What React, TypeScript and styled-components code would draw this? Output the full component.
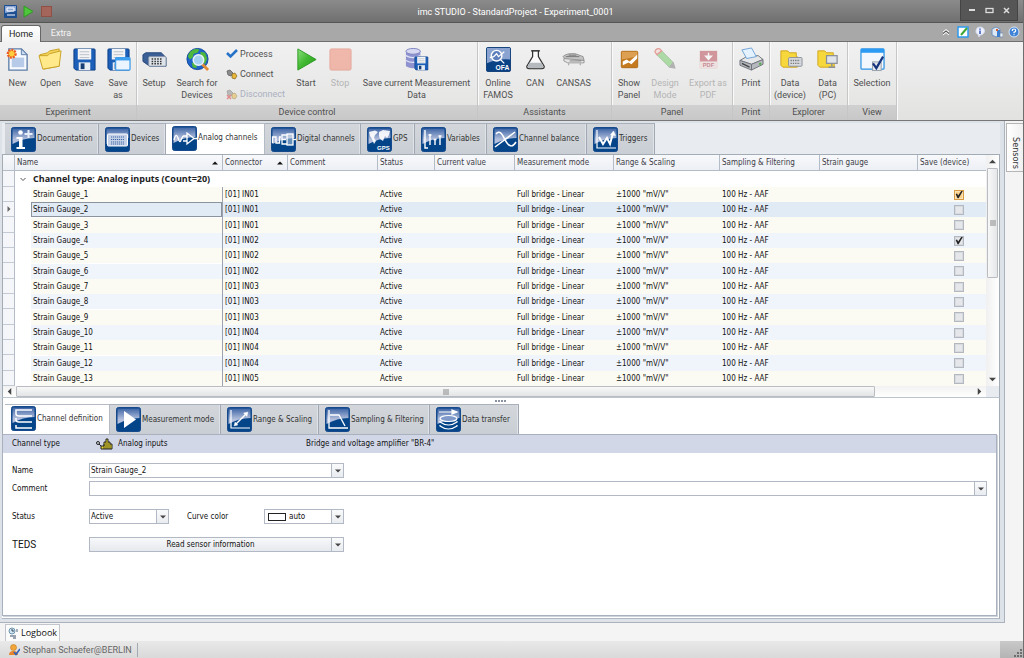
import React from 'react';
import styled, { createGlobalStyle, css } from 'styled-components';

const ui = 'Roboto, "Open Sans", sans-serif';
const dock = '"Open Sans", "Noto Sans", sans-serif';
const grid = '"DejaVu Sans Condensed", "DejaVu Sans", sans-serif';

const Global = createGlobalStyle`
  *, *::before, *::after { box-sizing: border-box; }
  body { margin: 0; font: 8px/12px ${grid}; color: #111; background: #f4f4f4; }
  button, input, select { font: inherit; color: inherit; margin: 0; padding: 0; border: 0; background: none; border-radius: 0; }
`;

/* ---------- window chrome ---------- */
const Shell = styled.div`
  display: flex; flex-direction: column; min-height: 100vh;
  border-right: 1px solid #6e6e6e;
`;
const TitleBar = styled.header`
  display: grid; grid-template-columns: 1fr auto 1fr; align-items: start; height: 23px;
  background: linear-gradient(#8b8b8b, #707070); border-bottom: 1px solid #555;
`;
const QuickBar = styled.div`
  display: flex; gap: 5px; padding: 5px 0 0 4px;
`;
const QuickButton = styled.button`width: 13px; height: 13px; line-height: 0;`;
const Title = styled.h1`
  margin: 0; padding: 5px 0 0 8px; font: 9px/14px ${ui}; color: #fff;
`;
const WindowButtons = styled.div`
  justify-self: end; display: flex; align-items: center; justify-content: center; gap: 4px;
  width: 58px; height: 21px; margin-right: 5px; background: #565656;
  border: 1px solid #444; border-top: 0;
`;
const WindowButton = styled.button`width: 13px; height: 13px; line-height: 0;`;
const MenuStrip = styled.nav`
  display: flex; align-items: flex-end; height: 19px; padding-left: 1px;
  background: #a8a8a8; border-bottom: 1px solid #707070; font: 9px/14px ${ui};
`;
const MenuTab = styled.button<{ $active?: boolean }>`
  width: 40px; height: 17px; margin-bottom: -1px; color: #f4f4f4; padding-bottom: 1px;
  ${p => p.$active && css`
    background: linear-gradient(#fff, #f2f2f2); color: #222; border: 1px solid #666;
    border-bottom: 0; border-radius: 3px 3px 0 0;
  `}
`;
const HelpTools = styled.div`
  display: flex; align-items: center; gap: 5px; margin-left: auto; height: 18px; padding-right: 3px;
`;
const HelpButton = styled.button`width: 12px; height: 12px; line-height: 0;`;

/* ---------- ribbon ---------- */
const Ribbon = styled.div`
  display: flex; height: 79px; background: linear-gradient(#f1f1f1, #e2e2e1);
  border-bottom: 1px solid #777; font: 9px/12px ${ui}; color: #505050;
`;
const Group = styled.section`
  display: flex; flex-direction: column; padding: 0 1px;
  border-right: 1px solid #c6c6c6; box-shadow: 1px 0 0 #fafafa;
`;
const GroupItems = styled.div<{ $tail?: number }>`display: flex; flex: 1; padding-right: ${p => p.$tail || 0}px;`;
const GroupTitle = styled.h2`
  margin: 0 -1px; font: inherit; line-height: 15px; height: 15px; text-align: center; color: #505050;
  background: linear-gradient(#d0d0d0, #c8c8c8);
`;
const BigButton = styled.button<{ $w: number }>`
  display: flex; flex-direction: column; align-items: center; gap: 5px; width: ${p => p.$w}px;
  padding-top: 5px; line-height: 12px; white-space: nowrap;
  &:disabled { color: #b4b4b4; }
  &:disabled svg { opacity: 0.5; }
  svg { flex: none; }
`;
const ButtonStack = styled.div`
  display: flex; flex-direction: column; width: 65px; padding: 5px 0 0 2px; gap: 6px;
`;
const SmallButton = styled.button`
  display: flex; align-items: center; gap: 2px; height: 14px;
  &:disabled { color: #aab0c0; }
  &:disabled svg { opacity: 0.5; }
`;

/* ---------- workspace ---------- */
const Workspace = styled.div`display: flex; flex: 1;`;
const Frame = styled.main`
  display: flex; flex-direction: column; flex: 1; min-width: 0;
  padding: 2px 4px 3px 2px; background: #dde2e8; border-right: 1px solid #a9b2bd; border-bottom: 1px solid #a9b2bd;
`;
const SideDock = styled.aside`width: 18px; padding: 2px 0 0 1px; background: #f4f4f4;`;
const SideTab = styled.button`
  writing-mode: vertical-rl; width: 17px; height: 49px; font-size: 9px; line-height: 15px; text-align: right; padding-bottom: 2px;
  background: linear-gradient(90deg, #fff, #f0f0f0); border: 1px solid #b5b5b5; border-right: 0; color: #333;
`;
const TabRow = styled.div<{ $plain?: boolean }>`
  display: flex; height: 31px; padding-left: 3px; background: #e8ebf0;
  ${p => p.$plain && css`height: 30px; padding-left: 2px; background: #fff; border-left: 1px solid #a3abb5;`}
`;
const Tab = styled.button<{ $w: number; $active?: boolean }>`
  display: flex; align-items: center; gap: 1px; width: ${p => p.$w}px; padding-left: 6px; white-space: nowrap;
  color: #333; background: linear-gradient(#d3d7dc, #c9ced4);
  border-top: 1px solid #a9b0ba; border-right: 1px solid #a0a8b3; box-shadow: inset -1px 0 0 #dfe3e8;
  svg { flex: none; }
  ${p => p.$active && css`background: #fff; box-shadow: none; border-color: #b4bbc5; padding-bottom: 2px;`}
`;

/* ---------- channel grid ---------- */
const GridBox = styled.section`
  display: grid; grid-template-columns: minmax(0, 1fr) 13px; background: #fff;
  border: 1px solid #a3abb5; border-bottom-color: #bcc4ce;
`;
const Table = styled.table`
  width: 100%; table-layout: fixed; border-collapse: separate; border-spacing: 0; text-align: left;
  td, th { padding: 0 0 0 2px; white-space: nowrap; overflow: hidden; font-weight: normal; }
  thead th {
    height: 16px; color: #3c3c46; background: linear-gradient(#f8f9fb, #eceff4);
    border-right: 1px solid #b4bcc8; border-bottom: 1px solid #b4bcc8;
  }
  thead th:last-child { border-right: 0; }
`;
const HeadCell = styled.div`display: flex; align-items: center; justify-content: space-between; padding-right: 4px;`;
const Row = styled.tr<{ $tone: 'cream' | 'blue' | 'focus' }>`
  height: 15px; line-height: 15px;
  &:nth-child(3n + 1) { height: 16px; }
  --tone: ${p => ({ cream: '#fbfbf3', blue: '#f0f4fb', focus: '#e1ebf6' })[p.$tone]};
  td { background: var(--tone); }
`;
const GroupRow = styled.tr`height: 16px;`;
const GroupLabel = styled.div`
  display: flex; align-items: center; gap: 6px; padding-left: 2px; color: #222; font: bold 9px/14px ${dock};
`;
const IndicatorCell = styled.td`
  && { background: #f4f6f9; border-right: 1px solid #b4bcc8; border-bottom: 1px solid #c3cad4; padding-left: 3px; line-height: 0; }
`;
const NameCell = styled.td`
  && { background: #fff; padding: 0 0 0 16px; border-right: 1px solid #9aa3af; }
`;
const NameText = styled.div<{ $focus: boolean }>`
  height: 15px; line-height: 13px; padding-left: 1px; background: var(--tone);
  border: 1px ${p => (p.$focus ? 'solid #8b939e' : 'solid transparent')};
`;
const CheckCell = styled.td`&& { padding: 0 0 0 36px; line-height: 0; }`;
const Check = styled.input<{ $hot?: boolean }>`
  appearance: none; display: block; width: 10px; height: 10px; background: ${p => (p.$hot ? '#fbd28c' : '#e6e7ea')};
  border: 1px solid ${p => (p.$hot ? '#d79a45' : '#b3b8c0')}; box-shadow: inset 0 0 0 1px ${p => (p.$hot ? '#fbe3b8' : '#d7dadf')};
  &:checked::before {
    content: ''; display: block; height: 8px; background: #222;
    clip-path: polygon(8% 45%, 25% 38%, 40% 62%, 78% 5%, 98% 5%, 45% 98%, 32% 98%);
  }
`;
const VScroll = styled.div`
  display: flex; flex-direction: column; align-items: center; background: linear-gradient(90deg, #f0f0f0, #fff);
`;
const ScrollButton = styled.button`display: grid; place-items: center; width: 13px; height: 13px; flex: none;`;
const VThumb = styled.div`
  display: grid; place-items: center; width: 11px; height: 110px; margin-bottom: auto;
  border: 1px solid #b9bdc2; border-radius: 1px; background: linear-gradient(90deg, #f8f8f8, #e4e6e8);
`;
const HScroll = styled.div`
  display: flex; align-items: center; height: 11px; background: linear-gradient(#f2f2f2, #fff);
`;
const HThumb = styled.div`
  display: grid; place-items: center; flex: 1; height: 11px; margin-right: 98px;
  border: 1px solid #b9bdc2; border-radius: 1px; background: linear-gradient(#f8f8f8, #e2e4e6);
`;
const Corner = styled.div`background: #e8ebf0;`;

/* ---------- property panel ---------- */
const Splitter = styled.div`
  display: grid; place-items: center; height: 6px; background: #fff; line-height: 0;
  border-left: 1px solid #a3abb5; border-right: 1px solid #a3abb5;
`;
const Lower = styled.section`
  display: flex; flex-direction: column; flex: 1; background: #fff; border-right: 1px solid #a3abb5;
  border-bottom: 1px solid #b0b7c1; padding: 0 2px 2px 0;
`;
const Panel = styled.div`
  flex: 1; border: 1px solid #a9b0be; box-shadow: 1px 1px 0 #cfd4db;
`;
const Banner = styled.div`
  display: grid; grid-template-columns: 84px 210px 1fr; align-items: center; height: 18px; padding-left: 9px; background: #d2d7e8;
`;
const BannerType = styled.span`display: flex; align-items: center; gap: 5px;`;
const Form = styled.form`
  display: grid; grid-template-columns: 77px 80px 95px 80px 1fr; align-items: center;
  row-gap: 3px; padding: 10px 9px;
`;
const Label = styled.label<{ $inset?: boolean; $large?: boolean }>`
  grid-column: ${p => (p.$inset ? 3 : 1)};
  ${p => p.$inset && css`padding-left: 18px;`}
  ${p => p.$large && css`font: 10px/14px ${ui};`}
`;
const Field = styled.div<{ $span?: string; $face?: boolean }>`
  display: flex; height: 15px; grid-column: ${p => p.$span || 'auto'};
  border: 1px solid #b3b9c4; background: ${p => (p.$face ? 'linear-gradient(#f7f8fa, #e6e9ed)' : '#fff')};
`;
const FieldSpace = styled.div`grid-column: 1 / -1; height: 7px;`;
const TextInput = styled.input`flex: 1; min-width: 0; padding-left: 1px; outline: 0;`;
const Select = styled.select`appearance: none; flex: 1; min-width: 0; padding-left: 1px; outline: 0;`;
const FaceButton = styled.button`flex: 1; text-align: center;`;
const DropButton = styled.button`
  display: grid; place-items: center; width: 12px; border-left: 1px solid #b3b9c4; background: linear-gradient(#f9fafb, #e9ecf0);
`;
const Swatch = styled.span`width: 18px; height: 8px; margin: 3px 2px 0 3px; border: 1px solid #222; background: #fff;`;

/* ---------- footer ---------- */
const DockBar = styled.div`
  display: flex; height: 18px; padding: 1px 0 0 5px; background: #f4f4f4; font: 9px/14px ${dock};
`;
const DockTab = styled.button`
  display: flex; align-items: center; gap: 2px; width: 55px; padding-left: 2px; background: #fbfbfb;
  border: 1px solid #c2c6cc; border-bottom: 0; white-space: nowrap;
`;
const StatusBar = styled.footer`
  display: flex; align-items: center; height: 17px; padding-left: 9px; gap: 3px;
  background: linear-gradient(#e9e9e9, #d9d9d9); font: 9px/14px ${ui}; color: #666;
`;
const StatusUser = styled.span`border-right: 1px solid #a3aab3; padding-right: 5px;`;
const Grip = styled.div`
  display: flex; align-items: flex-end; justify-content: flex-end; margin-left: auto; width: 23px; height: 17px;
  background: linear-gradient(#c9c9c9, #b4b4b4);
`;

/* ---------- drawings ---------- */
const Arrow = ({ dir = 'down', w = 7, color = '#444' }: { dir?: 'up' | 'down' | 'left' | 'right'; w?: number; color?: string }) => {
  const d = { up: 'M0 6L4 2L8 6Z', down: 'M0 2L4 6L8 2Z', left: 'M6 0L2 4L6 8Z', right: 'M2 0L6 4L2 8Z' }[dir];
  return <svg width={w} height={w} viewBox="0 0 8 8"><path d={d} fill={color} /></svg>;
};

const tileArt: Record<string, React.ReactNode> = {
  doc: <g fill="#fff"><circle cx="9.500" cy="5.500" r="2.300" /><path d="M5.500 10H11.500V20H14V22H5.500V20H8V12H5.500Z" /><path d="M17.500 3V11M13.500 7H21.500" stroke="#e8eef8" strokeWidth="2" /></g>,
  device: <g><rect x="2.500" y="7" width="20" height="12" rx="1" fill="#c4d0e6" stroke="#fff" /><path d="M6 10H19M6 12.500H19M6 15H19M6 17H19" stroke="#3c66a6" strokeWidth="1.200" strokeDasharray="1.200 .8" /></g>,
  analog: <g fill="none" stroke="#fff" strokeWidth="1.300"><path d="M2 14Q4 6 6 12T9 14L11 10M11 10H15M11 15H15M15 7V18L22 12.500ZM22 12.500H25" /></g>,
  digital: <g fill="none" stroke="#fff" strokeWidth="1.300"><path d="M1.500 16V10H5V16H8.500V10H10M16 8H11V17H16M11 12.500H15" /><rect x="16" y="7" width="6" height="11" fill="#ffffff66" /><path d="M22 12.500H25" /></g>,
  gps: <g fill="#fff"><path d="M2 5L8 3.500L11 5L8 8L7 11L9 14L7 17L5 12L3 9ZM12 5L16 3L23 4L22 8L20 11L18 9L16 14L13 12L12 9Z" opacity=".9" /><text x="10" y="23" fontSize="6" fontWeight="bold" fontFamily="Liberation Sans">GPS</text></g>,
  vars: <g fill="none" stroke="#fff" strokeWidth="1.400"><path d="M4 3V21H7M9 18V7M14 18V12M19 18V9M7.500 8H10.500M12.500 12.500H15.500M17.500 9H20.500" /></g>,
  balance: <g fill="none" stroke="#fff" strokeWidth="1.500"><path d="M2 20L22 5M3 7C8 1 11 12 14 16S20 20 23 15" /></g>,
  trigger: <g fill="none" stroke="#fff"><path d="M4 3V21H23" strokeWidth="1.200" /><path d="M6 10L10 17L14 11L17 17L20 6" strokeWidth="2" /><path d="M17.500 8L20.500 4L22.500 8.500Z" fill="#fff" strokeWidth=".5" /></g>,
  define: <g fill="none" stroke="#fff" strokeWidth="1.500"><path d="M21 4H5V8Q5 10 8 10H21M5 12V14Q5 16 8 16H21M5 19V22H21" /></g>,
  play: <path d="M8 4L20 12.500L8 21Z" fill="#fff" />,
  range: <g fill="none" stroke="#fff"><path d="M4 3V21H23" strokeWidth="1.200" /><path d="M9 17L19 7" strokeWidth="1.400" /><path d="M16.500 6L21 5L20 9.500ZM8 15L7 19L11 18Z" fill="#fff" strokeWidth=".3" /></g>,
  filter: <g fill="none" stroke="#fff" strokeWidth="1.300"><path d="M4 3V21H23M5 8H14L20 19" /></g>,
  transfer: <g fill="#7f9aca" stroke="#fff" strokeWidth="1.200"><path d="M3 5H18M16 3L21 5L16 7Z" fill="#fff" /><path d="M4 18V19Q12.500 25 21 19V18M4 14V15Q12.500 21 21 15V14" fill="none" /><ellipse cx="12.500" cy="11.500" rx="8.500" ry="3" /></g>,
};
const Tile = ({ kind }: { kind: string }) => (
  <svg width="25" height="25" viewBox="0 0 25 25">
    <defs><linearGradient id={`sheen-${kind}`} x1="0" y1="0" x2="0" y2="1"><stop offset="0" stopColor="#3f66a6" /><stop offset="0.700" stopColor="#b3bfdc" /></linearGradient></defs>
    <rect x=".5" y=".5" width="24" height="24" rx="2" fill="#04458a" stroke="#164a8c" />
    <path d="M1.500 1.500H23.500V11Q12 11 1.500 17Z" fill={`url(#sheen-${kind})`} />
    {tileArt[kind]}
  </svg>
);

const Floppy = () => <g><path d="M2 3Q2 2 3 2H23Q24 2 24 3V24H4L2 22Z" fill="#1c5fb8" stroke="#0e3f86" /><rect x="6" y="2" width="14" height="11" fill="#f3f4f6" /><path d="M8 5H18M8 8H18M8 11H18" stroke="#b9bec6" /><rect x="7" y="16" width="12" height="8" fill="#e8edf3" /><rect x="9" y="17" width="4" height="6" fill="#173d75" /></g>;
const Folder = () => <g stroke="#c9a227"><path d="M2 8L10 6L12 4L22 2V20L6 23Z" fill="#f3d25a" /><path d="M1 9L5 23L22 20L24 4L12 7L10 9Z" fill="#ffe98a" /></g>;
const MiniFolder = () => <path d="M3 4H10L12 6H19V10H20V21H5L3 19Z" fill="#f6d73c" stroke="#cfa520" />;

const art: Record<string, React.ReactNode> = {
  new: <g><path d="M4 2H17L23 8V24H4Z" fill="#f7faff" stroke="#5e7ea8" strokeWidth="1.400" /><path d="M17 2V8H23Z" fill="#cbdcf2" stroke="#5e7ea8" /><rect x="7" y="11" width="13" height="10" fill="#b7cbe8" /><circle cx="7" cy="7" r="4" fill="#ffcf3d" stroke="#ee5a24" strokeWidth="2.500" strokeDasharray="2 1" /></g>,
  open: <Folder />,
  save: <Floppy />,
  saveAs: <g><Floppy /><rect x="10" y="11" width="15" height="13" rx="1" fill="#eaf5ff" stroke="#3f9be8" strokeWidth="1.300" /><path d="M10 12.500H25" stroke="#3fa0f0" strokeWidth="3" /></g>,
  setup: <g><path d="M1 8L4 6H20L25 11V20H8L1 15Z" fill="#3c5f96" stroke="#26477c" /><rect x="7" y="10" width="18" height="10" rx="1" fill="#dfe4ea" stroke="#8593a8" /><path d="M10 12.500H21M10 15H21M10 17.500H21" stroke="#333" strokeWidth="1.600" strokeDasharray="1.600 1.300" /></g>,
  search: <g><circle cx="13" cy="12.500" r="11" fill="#1e63c9" stroke="#124a9c" /><path d="M4 7Q8 1 15 2.500L13 6L9 7L8 11L5 13L3 10ZM16 5L21 6L23 12L21 18L17 15ZM7 16L12 18L12 22L8 21Z" fill="#4eb83c" /><path d="M18 18L24 24" stroke="#e48b35" strokeWidth="3" /><circle cx="14" cy="13.500" r="5.500" fill="#bfe4fa" fillOpacity=".85" stroke="#e9f2f8" strokeWidth="1.500" /></g>,
  start: <path d="M4 2L23 13L4 24Z" fill="url(#leaf)" stroke="#2e9a24" strokeLinejoin="round" />,
  stop: <rect x="2" y="2" width="22" height="22" rx="1.500" fill="#f0836a" stroke="#e06650" />,
  data: <g><path d="M2 4V20Q9 24 17 20V4Z" fill="#8e93cf" /><path d="M2 9Q9 13 17 9M2 14Q9 18 17 14" stroke="#e2e4f7" fill="none" strokeWidth="1.300" /><ellipse cx="9.500" cy="4.500" rx="7.500" ry="3" fill="#d6d8f2" stroke="#8085c0" /><g transform="translate(10 9) scale(.62)"><Floppy /></g></g>,
  ofa: <g><rect x=".5" y=".5" width="25" height="25" rx="1.500" fill="#0a4286" stroke="#123f7a" /><path d="M1 1H25V13Q12 12 1 17Z" fill="#8aa3d0" /><circle cx="11" cy="9" r="5.500" fill="#5c7fbb" stroke="#fff" strokeWidth="1.500" /><path d="M15 13L19 17M4 11L8 10L11 7L13 10L19 5" stroke="#fff" strokeWidth="1.300" fill="none" /><text x="10" y="23.500" fontSize="7" fontWeight="bold" fill="#fff" fontFamily="Liberation Sans">OFA</text></g>,
  can: <g><path d="M10 4V10L4 20Q3.500 22.500 6.500 22.500H19.500Q22.500 22.500 22 20L16 10V4" fill="#fafafa" stroke="#333" strokeWidth="1.300" /><path d="M8.500 4H17.500" stroke="#333" strokeWidth="1.600" /><path d="M6.500 16.500H19.500L21 20.500Q20.500 22 19 22H7Q5 22 5 20Z" fill="#b5babe" /></g>,
  cansas: <g fill="#c3c3c3" stroke="#868686" strokeWidth=".8"><path d="M2 10Q6 6 15 7L23 10L24 14H6Z" /><path d="M3 12L24 14V16.500H7L3 14.500ZM8 17V19M20 17V19" fill="#e5e5e5" /><path d="M5 10H19M8 8.500H16M9 14.500H21" stroke="#555" strokeWidth=".7" /></g>,
  show: <g><rect x="4.500" y="4.500" width="17" height="17" rx="1" fill="#c57a1f" stroke="#b06a15" /><path d="M5 5H21V10L5 13Z" fill="#dda052" /><path d="M6 15L10 13L13 15L21 8V12L15 18L12 16L6 19Z" fill="#fff" /></g>,
  design: <g stroke="#6a9b62"><path d="M4 8L9 4L21 16L17 21Z" fill="#6cc860" /><path d="M4 8L9 4L7 2Q3 1 2 5Z" fill="#f3d4d0" stroke="#d94c42" strokeWidth="1.300" /><path d="M21 16L23 22L17 21Z" fill="#777" stroke="#777" /></g>,
  pdf: <g><rect x="4" y="4" width="18" height="18" fill="#b5404c" /><rect x="4" y="15" width="18" height="7" fill="#f0d6d8" /><path d="M13 6V11M10 9.500L13 13L16 9.500Z" stroke="#fff" fill="#fff" strokeWidth="1.500" /><text x="7" y="21" fontSize="6" fontWeight="bold" fill="#a02a36" fontFamily="Liberation Sans">PDF</text></g>,
  print: <g stroke="#70757c"><path d="M1 14L8 10L20 9L25 13L13 18Z" fill="#e6e7e9" /><path d="M3 3L13 1L18 10L8 12Z" fill="#e4f2ff" stroke="#6fa3d6" /><path d="M1 14V19L13 24V18ZM13 18L25 13V18L13 24Z" fill="#b5b8bd" /><path d="M3 17L11 21" stroke="#444" strokeWidth="1.500" /><path d="M21 17.500H23" stroke="#43b03c" strokeWidth="2" /></g>,
  dataDev: <g><MiniFolder /><rect x="11" y="11" width="14" height="9" rx="1" fill="#d8dbe0" stroke="#8b9098" /><path d="M13 14H23M13 17H23" stroke="#777" strokeWidth="1.400" strokeDasharray="1.400 1" /></g>,
  dataPc: <g><MiniFolder /><rect x="12" y="9" width="11" height="8" fill="#dfe4ea" stroke="#8b9098" strokeWidth="1.300" /><path d="M17.500 17V20M14 21H21" stroke="#8b9098" strokeWidth="1.500" /></g>,
  select: <g><rect x="1" y="2" width="24" height="21" rx="1" fill="#f1f7fd" stroke="#2d93e6" strokeWidth="1.300" /><path d="M1 4H25" stroke="#2a9af2" strokeWidth="4" /><rect x="13" y="15.500" width="9" height="9" fill="#e4e7ea" stroke="#98a0aa" /><path d="M13.500 17L17 22L24 10" stroke="#16357e" strokeWidth="2.300" fill="none" /></g>,
};
const Icon = ({ kind, size = 25 }: { kind: string; size?: number }) => (
  <svg width={size} height={size} viewBox="0 0 26 26">
    <defs><linearGradient id="leaf" x1="0" y1="0" x2="1" y2="1"><stop offset="0" stopColor="#8be07c" /><stop offset=".5" stopColor="#3fb72f" /><stop offset="1" stopColor="#2a9a1e" /></linearGradient></defs>
    {art[kind]}
  </svg>
);
const TickIcon = () => <svg width="12" height="12" viewBox="0 0 12 12"><path d="M1 5L4.500 8.500L11 2" stroke="#2672c8" strokeWidth="2.600" fill="none" /></svg>;
const PlugIcon = ({ off }: { off?: boolean }) => (
  <svg width="12" height="12" viewBox="0 0 12 12"><path d="M1 3L4 2L7 5L5 8L2 7Z" fill="#8c8c8c" stroke="#555" strokeWidth=".7" /><path d="M6 6L9 5L11 8L9 11L6 10Z" fill="#e9b83a" stroke="#7d6420" strokeWidth=".7" />{off && <path d="M1 7L5 11M5 7L1 11" stroke="#d33" strokeWidth="1.500" />}</svg>
);

/* ---------- data ---------- */
const inputs = ['01', '01', '01', '02', '02', '02', '03', '03', '03', '04', '04', '04', '05'];
const columns: [string, number][] = [
  ['Name', 208], ['Connector', 65], ['Comment', 90], ['Status', 57], ['Current value', 80], ['Measurement mode', 99],
  ['Range & Scaling', 106], ['Sampling & Filtering', 100], ['Strain gauge', 98], ['Save (device)', 68],
];
const viewTabs: [string, string, number][] = [
  ['doc', 'Documentation', 94], ['device', 'Devices', 67], ['analog', 'Analog channels', 99], ['digital', 'Digital channels', 96],
  ['gps', 'GPS', 54], ['vars', 'Variables', 72], ['balance', 'Channel balance', 100], ['trigger', 'Triggers', 68],
];
const detailTabs: [string, string, number][] = [
  ['define', 'Channel definition', 105], ['play', 'Measurement mode', 111], ['range', 'Range & Scaling', 98],
  ['filter', 'Sampling & Filtering', 111], ['transfer', 'Data transfer', 89],
];

type Cmd = { icon: string; text: string[]; w: number; off?: boolean };
const Command = ({ icon, text, w, off }: Cmd) => (
  <BigButton $w={w} disabled={off}>
    <Icon kind={icon} />
    <span>{text.map((t, i) => <React.Fragment key={t}>{i > 0 && <br />}{t}</React.Fragment>)}</span>
  </BigButton>
);
const RibbonGroup = ({ title, tail, children }: { title: string; tail?: number; children: React.ReactNode }) => (
  <Group><GroupItems $tail={tail}>{children}</GroupItems><GroupTitle>{title}</GroupTitle></Group>
);

export default function App() {
  return (
    <Shell>
      <Global />
      <TitleBar>
        <QuickBar>
          <QuickButton aria-label="Application menu"><svg width="13" height="13" viewBox="0 0 13 13"><rect width="13" height="13" rx="1" fill="#1d4f93" /><path d="M1 1H12V6L1 8Z" fill="#8da8d4" /><path d="M3 3H10V6H3ZM3 10H11" fill="none" stroke="#fff" /></svg></QuickButton>
          <QuickButton aria-label="Start"><svg width="13" height="13" viewBox="0 0 13 13"><path d="M2 1L11 6.500L2 12Z" fill="#4fc63c" stroke="#2f9a22" /></svg></QuickButton>
          <QuickButton aria-label="Stop"><svg width="13" height="13" viewBox="0 0 13 13"><rect x="1.500" y="1.500" width="10" height="10" fill="#a4655a" stroke="#8f5046" /></svg></QuickButton>
        </QuickBar>
        <Title>imc STUDIO - StandardProject - Experiment_0001</Title>
        <WindowButtons>
          <WindowButton aria-label="Minimize"><svg width="13" height="13"><path d="M3 6H9" stroke="#ddd" strokeWidth="2" /></svg></WindowButton>
          <WindowButton aria-label="Maximize"><svg width="13" height="13"><rect x="3" y="4.500" width="7" height="4" fill="none" stroke="#ddd" strokeWidth="1.300" /></svg></WindowButton>
          <WindowButton aria-label="Close"><svg width="13" height="13"><path d="M4 4L9 9M9 4L4 9" stroke="#ddd" strokeWidth="1.500" /></svg></WindowButton>
        </WindowButtons>
      </TitleBar>
      <MenuStrip>
        <MenuTab $active>Home</MenuTab>
        <MenuTab>Extra</MenuTab>
        <HelpTools>
          <HelpButton aria-label="Collapse ribbon"><svg width="12" height="12"><path d="M3 6L6 3.500L9 6M3 9L6 6.500L9 9" stroke="#fff" fill="none" /><path d="M3 7.500L6 5L9 7.500" stroke="#555" fill="none" /></svg></HelpButton>
          <HelpButton aria-label="Edit layout"><svg width="12" height="12"><rect x="1" y="1" width="10" height="10" fill="#fff" stroke="#2d9af0" strokeWidth="1.500" /><path d="M4 9L10 2" stroke="#3fa635" strokeWidth="2" /></svg></HelpButton>
          <HelpButton aria-label="Information"><svg width="12" height="12"><path d="M6 1A4.500 4 0 0 1 6 9L5 11L4 8.500A4 4 0 0 1 6 1Z" fill="#eef2ff" stroke="#d3d9ea" /><path d="M6 2.500V3.800M6 4.500V8" stroke="#3556b5" strokeWidth="1.500" /></svg></HelpButton>
          <HelpButton aria-label="Packages"><svg width="12" height="12"><path d="M1 3L5 1L9 3V9L5 11L1 9Z" fill="#dde8f5" stroke="#6d90bd" /><rect x="6" y="4" width="3" height="7" fill="#3b7fd0" /><rect x="9" y="7" width="3" height="4" fill="#e9eef5" stroke="#5a7ca8" strokeWidth=".6" /><rect x="5" y="3" width="2" height="2" fill="#d85a2a" /></svg></HelpButton>
          <HelpButton aria-label="Help"><svg width="12" height="12"><circle cx="6" cy="6" r="5" fill="#3d82d6" stroke="#dbe7f5" /><path d="M4.300 5Q4.300 3 6 3T7.700 4.800Q7.500 5.800 6 6.300V7.300M6 8.200V9.300" stroke="#fff" fill="none" strokeWidth="1.200" /></svg></HelpButton>
        </HelpTools>
      </MenuStrip>

      <Ribbon>
        <RibbonGroup title="Experiment">
          <Command icon="new" text={['New']} w={33} />
          <Command icon="open" text={['Open']} w={33} />
          <Command icon="save" text={['Save']} w={34} />
          <Command icon="saveAs" text={['Save', 'as']} w={34} />
        </RibbonGroup>
        <RibbonGroup title="Device control">
          <Command icon="setup" text={['Setup']} w={32} />
          <Command icon="search" text={['Search for', 'Devices']} w={54} />
          <ButtonStack>
            <SmallButton><TickIcon />Process</SmallButton>
            <SmallButton><PlugIcon />Connect</SmallButton>
            <SmallButton disabled><PlugIcon off />Disconnect</SmallButton>
          </ButtonStack>
          <Command icon="start" text={['Start']} w={34} />
          <Command icon="stop" text={['Stop']} w={34} off />
          <Command icon="data" text={['Save current Measurement', 'Data']} w={119} />
        </RibbonGroup>
        <RibbonGroup title="Assistants" tail={16}>
          <Command icon="ofa" text={['Online', 'FAMOS']} w={38} />
          <Command icon="can" text={['CAN']} w={36} />
          <Command icon="cansas" text={['CANSAS']} w={41} />
        </RibbonGroup>
        <RibbonGroup title="Panel">
          <Command icon="show" text={['Show', 'Panel']} w={32} />
          <Command icon="design" text={['Design', 'Mode']} w={40} off />
          <Command icon="pdf" text={['Export as', 'PDF']} w={46} off />
        </RibbonGroup>
        <RibbonGroup title="Print">
          <Command icon="print" text={['Print']} w={34} />
        </RibbonGroup>
        <RibbonGroup title="Explorer">
          <Command icon="dataDev" text={['Data', '(device)']} w={38} />
          <Command icon="dataPc" text={['Data', '(PC)']} w={37} />
        </RibbonGroup>
        <RibbonGroup title="View">
          <Command icon="select" text={['Selection']} w={46} />
        </RibbonGroup>
      </Ribbon>

      <Workspace>
        <Frame>
          <TabRow>
            {viewTabs.map(([k, t, w]) => <Tab key={k} $w={w} $active={k === 'analog'}><Tile kind={k} />{t}</Tab>)}
          </TabRow>
          <GridBox>
            <Table>
              <colgroup><col width="12" />{columns.map(([n, w]) => <col key={n} width={w} />)}</colgroup>
              <thead>
                <tr>
                  <th />
                  {columns.map(([n]) => (
                    <th key={n} scope="col"><HeadCell>{n}{(n === 'Name' || n === 'Connector') && <Arrow dir="up" w={6} color="#111" />}</HeadCell></th>
                  ))}
                </tr>
              </thead>
              <tbody>
                <GroupRow>
                  <IndicatorCell />
                  <td colSpan={10}><GroupLabel><svg width="8" height="8"><path d="M1.500 3L4 5.500L6.500 3" fill="none" stroke="#555" /></svg>Channel type: Analog inputs (Count=20)</GroupLabel></td>
                </GroupRow>
                {inputs.map((c, i) => (
                  <Row key={i} $tone={i === 1 ? 'focus' : i % 2 ? 'blue' : 'cream'}>
                    <IndicatorCell>{i === 1 && <Arrow dir="right" w={6} color="#666" />}</IndicatorCell>
                    <NameCell><NameText $focus={i === 1}>Strain Gauge_{i + 1}</NameText></NameCell>
                    <td>[01] IN{c}</td>
                    <td />
                    <td>Active</td>
                    <td />
                    <td>Full bridge - Linear</td>
                    <td>±1000 "mV/V"</td>
                    <td>100 Hz - AAF</td>
                    <td />
                    <CheckCell><Check type="checkbox" aria-label={`Save Strain Gauge_${i + 1}`} defaultChecked={i === 0 || i === 3} $hot={i === 0} /></CheckCell>
                  </Row>
                ))}
              </tbody>
            </Table>
            <VScroll>
              <ScrollButton aria-label="Scroll up"><Arrow dir="up" /></ScrollButton>
              <VThumb><svg width="6" height="6"><path d="M0 1H6M0 3H6M0 5H6" stroke="#888" /></svg></VThumb>
              <ScrollButton aria-label="Scroll down"><Arrow /></ScrollButton>
            </VScroll>
            <HScroll>
              <ScrollButton aria-label="Scroll left"><Arrow dir="left" /></ScrollButton>
              <HThumb><svg width="6" height="6"><path d="M1 0V6M3 0V6M5 0V6" stroke="#888" /></svg></HThumb>
              <ScrollButton aria-label="Scroll right"><Arrow dir="right" /></ScrollButton>
            </HScroll>
            <Corner />
          </GridBox>
          <Splitter><svg width="12" height="2"><path d="M0 1H12" stroke="#8c94a4" strokeWidth="2" strokeDasharray="2 1" /></svg></Splitter>
          <Lower>
            <TabRow $plain>
              {detailTabs.map(([k, t, w]) => <Tab key={k} $w={w} $active={k === 'define'}><Tile kind={k} />{t}</Tab>)}
            </TabRow>
            <Panel>
              <Banner>
                <span>Channel type</span>
                <BannerType>
                  <svg width="17" height="12" viewBox="0 0 17 12"><circle cx="2" cy="5" r="1.500" fill="none" stroke="#222" /><path d="M3 6L5 8" stroke="#222" /><path d="M5 11V8H8V4H10V1H12V4H14V6H16V11Z" fill="#f0e02c" stroke="#222" /><path d="M8 11V6M10 11V4M12 11V4M14 11V6" stroke="#222" strokeWidth=".8" /></svg>
                  Analog inputs
                </BannerType>
                <span>Bridge and voltage amplifier "BR-4"</span>
              </Banner>
              <Form>
                <Label htmlFor="name">Name</Label>
                <Field $span="2 / 5"><TextInput id="name" defaultValue="Strain Gauge_2" /><DropButton type="button" aria-label="Name list"><Arrow w={6} /></DropButton></Field>
                <Label htmlFor="comment">Comment</Label>
                <Field $span="2 / 6"><TextInput id="comment" /><DropButton type="button" aria-label="Comment list"><Arrow w={6} /></DropButton></Field>
                <FieldSpace />
                <Label htmlFor="status">Status</Label>
                <Field><Select id="status"><option>Active</option></Select><DropButton type="button" aria-label="Status list"><Arrow w={6} /></DropButton></Field>
                <Label htmlFor="curve" $inset>Curve color</Label>
                <Field><Swatch /><Select id="curve"><option>auto</option></Select><DropButton type="button" aria-label="Color list"><Arrow w={6} /></DropButton></Field>
                <FieldSpace />
                <Label htmlFor="teds" $large>TEDS</Label>
                <Field $span="2 / 5" $face><FaceButton type="button" id="teds">Read sensor information</FaceButton><DropButton type="button" aria-label="Sensor options"><Arrow w={6} /></DropButton></Field>
              </Form>
            </Panel>
          </Lower>
        </Frame>
        <SideDock><SideTab>Sensors</SideTab></SideDock>
      </Workspace>

      <DockBar>
        <DockTab><svg width="11" height="12"><circle cx="4" cy="4" r="3" fill="#cfe6f2" stroke="#6e93ad" /><path d="M4 2V4H6" stroke="#345" fill="none" /><path d="M9 2V5M2 9H8M5 11H8" stroke="#7a8797" strokeWidth="1.300" /></svg>Logbook</DockTab>
      </DockBar>
      <StatusBar>
        <svg width="11" height="12"><circle cx="4.500" cy="3.500" r="3" fill="#f0a63a" stroke="#c27a1d" strokeWidth=".6" /><path d="M0 11Q0 7 4.500 7T9 11Z" fill="#e8852a" /><path d="M5 8L7 10.500L11 5" stroke="#2b5fc0" strokeWidth="1.600" fill="none" /></svg>
        <StatusUser>Stephan Schaefer@BERLIN</StatusUser>
        <Grip><svg width="10" height="10"><path d="M7 2H9M4 5H9M1 8H9" stroke="#555" strokeWidth="1.500" strokeDasharray="2 1" /></svg></Grip>
      </StatusBar>
    </Shell>
  );
}
